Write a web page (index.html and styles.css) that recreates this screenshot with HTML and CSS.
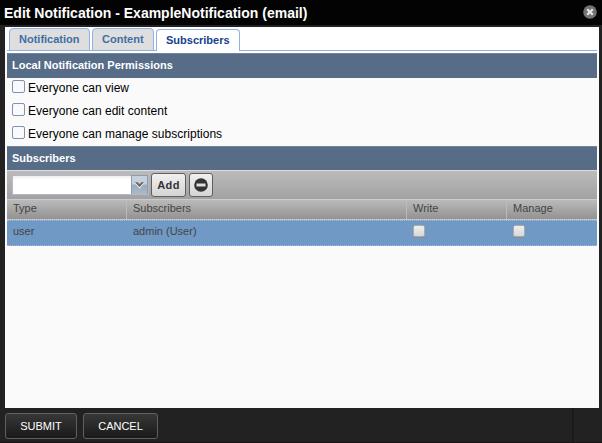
FILE: index.html
```html
<!DOCTYPE html>
<html lang="en">
<head>
<meta charset="utf-8">
<title>Edit Notification</title>
<link rel="stylesheet" href="styles.css">
</head>
<body>
<div class="dialog">
  <header class="titlebar">
    <h1><span>Edit Notification - ExampleNotification (email)</span></h1>
    <svg class="close" width="14" height="14" viewBox="0 0 14 14"><circle cx="7" cy="7" r="6.8" fill="#737373"/><path d="M4.2 4.2l5.6 5.6M9.8 4.2L4.2 9.8" stroke="#e4e4e4" stroke-width="2.3"/></svg>
  </header>
  <main class="panel">
    <nav class="tabs">
      <a class="tab t1">Notification</a>
      <a class="tab t2">Content</a>
      <a class="tab t3 active">Subscribers</a>
    </nav>
    <h2 class="section first"><span>Local Notification Permissions</span></h2>
    <div class="permissions">
      <label><i class="box"></i><span>Everyone can view</span></label>
      <label><i class="box"></i><span>Everyone can edit content</span></label>
      <label><i class="box"></i><span>Everyone can manage subscriptions</span></label>
    </div>
    <h2 class="section second"><span>Subscribers</span></h2>
    <div class="toolbar">
      <div class="combo"><div class="field"></div><div class="trigger"><svg width="9" height="7" viewBox="0 0 9 7"><path d="M0 1.2h3l1.5 1.6L6 1.2h3L4.5 6.5z" fill="#fff"/><path d="M0 .3h2.8l1.7 1.9L6.2.3H9L4.5 5.3z" fill="#666"/></svg></div></div>
      <button class="btn add"><span>Add</span></button>
      <button class="btn remove"><svg width="14" height="14" viewBox="0 0 14 14"><circle cx="7" cy="7" r="6.8" fill="#333"/><path d="M2.5 5.5h9v3h-9z" fill="#dedede"/></svg></button>
    </div>
    <div class="row head">
      <div><span>Type</span></div><div><span>Subscribers</span></div><div><span>Write</span></div><div><span>Manage</span></div>
    </div>
    <div class="row record">
      <div><span>user</span></div><div><span>admin (User)</span></div><div><i class="check"></i></div><div><i class="check"></i></div>
    </div>
  </main>
  <footer class="actions">
    <button class="action submit"><span>SUBMIT</span></button>
    <button class="action cancel"><span>CANCEL</span></button>
    <div class="divider"></div>
  </footer>
</div>
</body>
</html>
```

FILE: styles.css
```css
* { box-sizing: border-box; }
body { margin: 0; background: #222; font-family: "Liberation Sans", Arial, sans-serif; }
h1, h2 { margin: 0; }
span { white-space: nowrap; }
button { font-family: inherit; padding: 0; margin: 0; }
.dialog { width: 602px; height: 443px; overflow: hidden; display: flex; flex-direction: column; }
.titlebar { height: 27px; flex: none; display: flex; justify-content: space-between; background: #030303; border-bottom: 2px solid #222; padding: 0 5px 0 4px; color: #fff; }
h1 { font-size: 14px; line-height: 16px; padding-top: 5px; letter-spacing: 0; }
.close { margin-top: 5px; }
.panel { height: 381px; flex: none; width: 594px; margin-left: 5px; padding: 0 2px; background: linear-gradient(#fff 26px, #fafafa 26px); }
.tabs { height: 24px; display: flex; gap: 2px; padding: 1px 0 0 2px; margin-bottom: 2px; background: linear-gradient(#8db2e3, #8db2e3) 0 23px / 100% 1px no-repeat; }
.tab { height: 23px; border: 1px solid #8db2e3; border-radius: 4px 4px 0 0; background: #dedede; color: #416da3; font-weight: bold; font-size: 11px; line-height: 13px; padding: 4px 0 0 9px; white-space: nowrap; }
.t1 { width: 81px; }
.t2 { width: 62px; }
.t3 { width: 84px; margin-top: 1px; }
.tab.active { background: #fff; border-bottom: 0; color: #15428b; height: 22px; }
.section { background: #566c87; border-top: 1px solid #74859b; color: #fff; font-size: 11px; line-height: 13px; padding: 5px 5px 0; }
.first { height: 25px; }
.second { height: 24px; }
.permissions { height: 68px; padding-top: 2px; }
.permissions label { display: flex; height: 23px; padding-left: 5px; font-size: 12px; line-height: 14px; letter-spacing: 0.02px; color: #000; }
.permissions span { margin: 1px 0 0 3px; }
.box { width: 13px; height: 13px; border: 1px solid #8291ac; border-radius: 2px; background: #f9fafd; }
.toolbar { height: 29px; border-top: 1px solid #ddd; background: linear-gradient(#bbb, #a2a2a2); display: flex; padding: 2px 5px; }
.combo { display: flex; width: 137px; height: 20px; margin: 2px 2px 0 0; border: 1px solid #b5b8c8; }
.field { flex: 1; background: linear-gradient(#eee, #fff 4px); }
.trigger { width: 17px; margin-top: -1px; display: flex; align-items: center; justify-content: center; border: 1px solid #8c9dae; border-bottom: 0; background: linear-gradient(#c5d0da 45%, #9aacbd 50%, #a9bac8); }
.btn { height: 24px; border: 1px solid #606060; border-radius: 3px; background: linear-gradient(#f0f0f0, #d4d4d4); color: #333; display: flex; align-items: center; justify-content: center; }
.add { width: 35px; margin-right: 3px; font-size: 11px; font-weight: bold; letter-spacing: 0.4px; }
.remove { width: 24px; }
.row { display: grid; grid-template-columns: 120px 280px 100px 1fr; color: #444; font-size: 11px; line-height: 13px; }
.head { height: 21px; border-top: 1px solid #ccc; border-bottom: 1px solid #c8c8c8; background: linear-gradient(#bababa, #929292); }
.head div { border-right: 1px solid #bbb; padding: 2px 0 0 6px; }
.head div:last-child { border: 0; }
.record { height: 26px; background: #7099c6; border-top: 1px dotted #a3bae9; border-bottom: 1px dotted #a3bae9; }
.record div { padding: 4px 0 0 6px; }
.check { display: block; width: 12px; height: 12px; border: 1px solid #aaa; border-radius: 2px; background: linear-gradient(#eee, #d8d8d8); box-shadow: 0 1px 0 #818d9b; }
.actions { flex: 1; display: flex; gap: 6px; padding: 5px 28px 0 5px; border-bottom: 1px solid #1c1216; }
.action { height: 26px; border: 1px solid #606060; border-radius: 3px; background: linear-gradient(#373737, #1a1a1a); color: #fff; font-size: 11px; }
.submit { width: 72px; }
.cancel { width: 75px; }
.divider { width: 2px; height: 34px; margin: -5px 0 0 auto; background: #1a1a1a; }
```
